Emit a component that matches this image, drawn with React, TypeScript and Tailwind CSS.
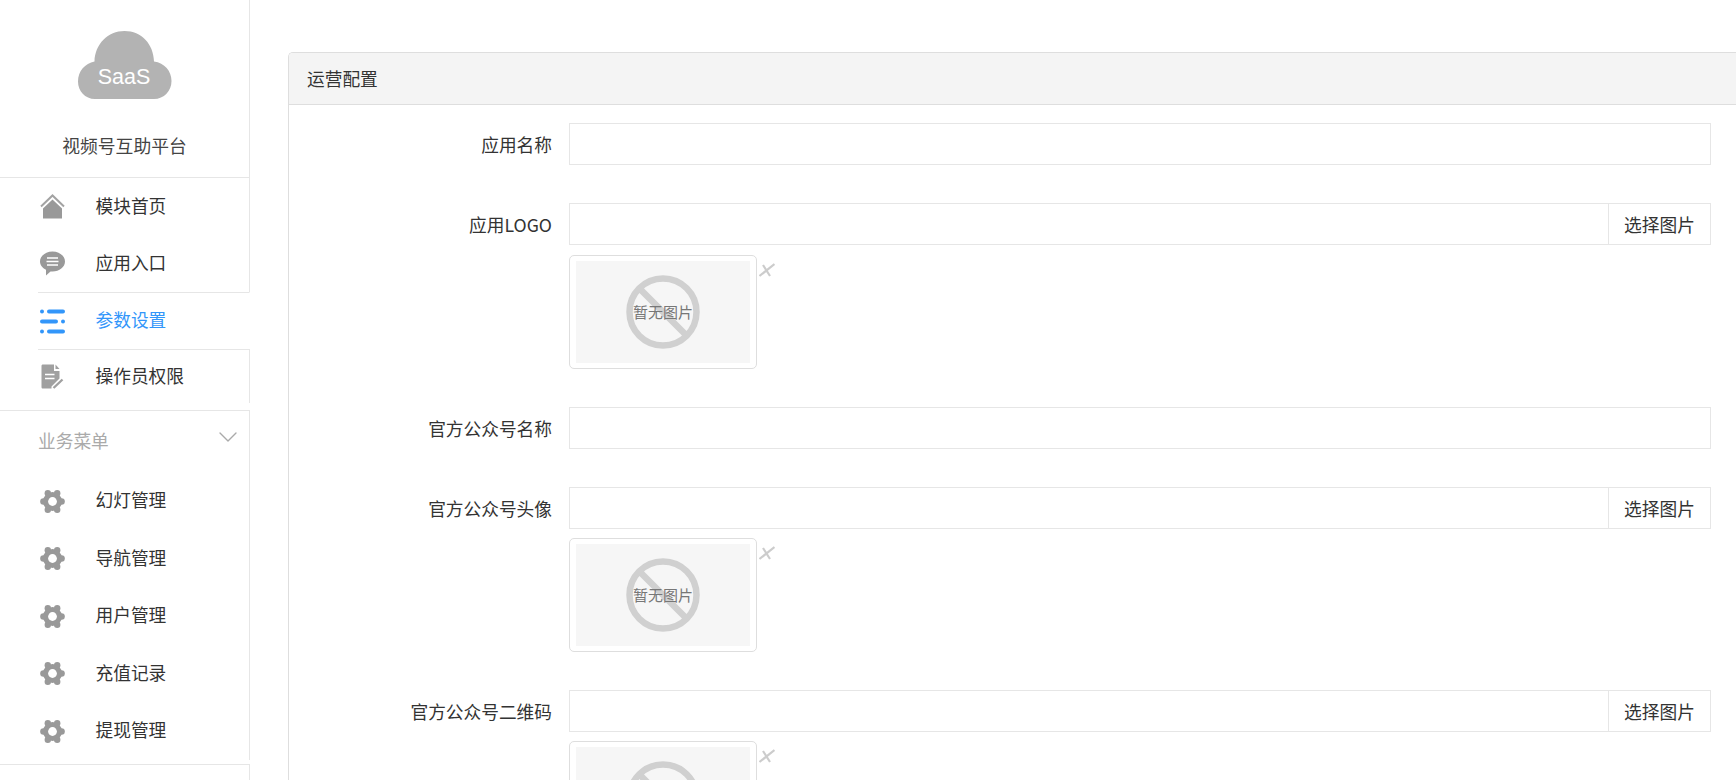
import { ChevronDown } from "lucide-react";
import type { ReactNode } from "react";

const FONT = "font-['Microsoft_YaHei','Noto_Sans_CJK_SC','Liberation_Sans',sans-serif]";

function CloudLogo() {
  return (
    <svg width="94" height="68" viewBox="0 0 94 68" className="block">
      <path
        d="M17 68C7 68 0 60 0 50.500C0 40 7 32.500 16.500 30.500C17 13 30 0 46.500 0C63.500 0 75.500 13 76 30.500C86.500 32 93.500 40 93.500 50C93.500 60 86 68 76 68Z"
        fill="#b3b3b3"
      />
      <text x="46" y="53" textAnchor="middle" fill="#fff" fontSize="21.500" fontFamily="Liberation Sans, sans-serif">
        SaaS
      </text>
    </svg>
  );
}

function HomeIcon() {
  return (
    <svg width="25" height="25" viewBox="0 0 25 25">
      <path d="M1 12.500L12.500 1.500L24 12.500" fill="none" stroke="#a3a3a3" strokeWidth="2" />
      <path d="M12.500 5.500L22 14.500V24.500H3V14.500Z" fill="#999" />
    </svg>
  );
}

function ChatIcon() {
  return (
    <svg width="25" height="25" viewBox="0 0 25 25">
      <path
        d="M12.500 0.500C19.400 0.500 25 5 25 10.500C25 16 19.400 20.500 12.500 20.500C11.800 20.500 11.200 20.500 10.500 20.400L6 24.500V18.700C2.400 17 0 14 0 10.500C0 5 5.600 0.500 12.500 0.500Z"
        fill="#999"
      />
      <path d="M7 7H18M6.500 10.500H18.500M7 14H18" stroke="#fff" strokeWidth="1.600" />
    </svg>
  );
}

function ListIcon() {
  return (
    <svg width="25" height="25" viewBox="0 0 25 25" fill="#3296fa">
      <circle cx="2" cy="2.500" r="2" />
      <rect x="7" y="0.500" width="18" height="4" rx="2" />
      <rect x="0" y="10.500" width="18" height="4" rx="2" />
      <circle cx="23" cy="12.500" r="2" />
      <circle cx="2" cy="22.500" r="2" />
      <rect x="7" y="20.500" width="18" height="4" rx="2" />
    </svg>
  );
}

function DocIcon() {
  return (
    <svg width="25" height="25" viewBox="0 0 25 25">
      <path d="M3 0.500H14V7H19.500V14.500L11.500 22.500V24.500H3C2 24.500 1.500 24 1.500 23V2C1.500 1 2 0.500 3 0.500Z" fill="#a0a0a0" />
      <path d="M15.500 0.500L19.500 5H15.500Z" fill="#a0a0a0" />
      <path d="M5 10.500H14.500M5 14.500H14.500" stroke="#fff" strokeWidth="1.700" />
      <path d="M13.500 24L22.500 15.500" stroke="#a0a0a0" strokeWidth="2.400" />
    </svg>
  );
}

function GearIcon() {
  return (
    <svg width="25" height="25" viewBox="0 0 25 25" fill="#999">
      <circle cx="12.500" cy="12.500" r="9.500" />
      <circle cx="3.400" cy="12.500" r="3.200" />
      <circle cx="21.600" cy="12.500" r="3.200" />
      <circle cx="7.800" cy="4.300" r="3.200" />
      <circle cx="17.200" cy="4.300" r="3.200" />
      <circle cx="7.800" cy="20.700" r="3.200" />
      <circle cx="17.200" cy="20.700" r="3.200" />
      <circle cx="12.500" cy="12.500" r="4.400" fill="#fff" />
    </svg>
  );
}

function NavItem({
  icon,
  label,
  active,
  divided,
  className,
}: {
  icon: ReactNode;
  label: string;
  active?: boolean;
  divided?: boolean;
  className: string;
}) {
  return (
    <div
      className={`ml-[38px] flex items-center border-r ${className} ${
        divided ? "border-t border-t-[#e6e6e6]" : ""
      } ${active ? "border-r-transparent text-[#3296fa]" : "border-r-[#e6e6e6] text-[#333]"}`}
    >
      <span className="w-[57.500px] pl-[2px] flex items-center shrink-0">{icon}</span>
      <span className="text-[17.700px] leading-none pb-[2px]">{label}</span>
    </div>
  );
}

const BUSINESS_MENU = ["幻灯管理", "导航管理", "用户管理", "充值记录", "提现管理"];

function Sidebar() {
  return (
    <aside className="w-[250px] h-[780px] shrink-0 overflow-hidden">
      <div className="h-[178px] border-r border-b border-[#e6e6e6] flex flex-col items-center pt-[31px]">
        <CloudLogo />
        <div className="mt-[33px] text-[17.800px] leading-[26px] text-[#444]">视频号互助平台</div>
      </div>
      <NavItem icon={<HomeIcon />} label="模块首页" className="h-[57px]" />
      <NavItem icon={<ChatIcon />} label="应用入口" className="h-[57px]" />
      <NavItem icon={<ListIcon />} label="参数设置" active divided className="h-[57px]" />
      <NavItem icon={<DocIcon />} label="操作员权限" divided className="h-[54px]" />
      <div className="mt-[7px] border-t border-t-[#e6e6e6] border-r border-r-[#e6e6e6] h-[62px] pl-[38px] pr-[5px] flex items-center justify-between">
        <span className="text-[17.700px] leading-none pb-[2px] text-[#aaa]">业务菜单</span>
        <ChevronDown size={32} strokeWidth={1} className="text-[#aaa] -mt-[9px]" />
      </div>
      {BUSINESS_MENU.map((label) => (
        <NavItem key={label} icon={<GearIcon />} label={label} className="h-[57.500px] pt-[1px]" />
      ))}
      <div className="mt-[4.500px] border-t border-t-[#e6e6e6] border-r border-r-[#e6e6e6] h-[20px]" />
    </aside>
  );
}

function ImagePreview({ className }: { className: string }) {
  return (
    <div className={`relative w-[188px] h-[114px] border border-[#dedede] rounded-[5px] px-[6px] py-[5px] ${className}`}>
      <div className="relative h-full bg-[#f6f6f6] flex items-center justify-center">
        <svg width="74" height="74" viewBox="0 0 74 74" className="absolute">
          <circle cx="37" cy="37" r="33.500" fill="none" stroke="#d0d0d0" strokeWidth="6.500" />
          <path d="M13 13L61 61" stroke="#d0d0d0" strokeWidth="6.500" />
        </svg>
        <span className="relative text-[15px] leading-none pb-[2px] text-[#777]">暂无图片</span>
      </div>
      <svg width="16" height="14" viewBox="0 0 16 14" className="absolute top-[7px] left-[189px]">
        <path d="M0.500 13L15.500 1M4 2L11 13" stroke="#ccc" strokeWidth="2.200" />
      </svg>
    </div>
  );
}

function FormRow({
  label,
  picker,
  previewClass = "mt-[9px]",
  className,
}: {
  label: string;
  picker?: boolean;
  previewClass?: string;
  className: string;
}) {
  return (
    <div className={`flex ${className}`}>
      <label className="w-[280px] pr-[17px] shrink-0 text-right text-[17.700px] leading-[42px] text-[#333]">
        {label}
      </label>
      <div className="flex-1">
        <div className="h-[42px] border border-[#e6e6e6] flex">
          <div className="flex-1" />
          {picker && (
            <div className="w-[102px] border-l border-l-[#e6e6e6] flex items-center justify-center text-[17.700px] text-[#333]">
              选择图片
            </div>
          )}
        </div>
        {picker && <ImagePreview className={previewClass} />}
      </div>
    </div>
  );
}

export default function App() {
  return (
    <div className={`flex w-[1736px] h-[780px] overflow-hidden bg-white ${FONT}`}>
      <Sidebar />
      <main className="flex-1 pl-[38px] pt-[52px] min-w-0">
        <div className="border border-r-0 border-[#dedede] rounded-tl-[5px] h-[760px] overflow-hidden">
          <div className="h-[52px] bg-[#f4f4f4] border-b border-b-[#dedede] pl-[18px] flex items-center text-[17.700px] text-[#333]">
            运营配置
          </div>
          <div className="pr-[25px] pt-[18px]">
            <FormRow label="应用名称" className="" />
            <FormRow label="应用LOGO" picker previewClass="mt-[10px]" className="mt-[38px]" />
            <FormRow label="官方公众号名称" className="mt-[38px]" />
            <FormRow label="官方公众号头像" picker className="mt-[38px]" />
            <FormRow label="官方公众号二维码" picker className="mt-[38px]" />
          </div>
        </div>
      </main>
    </div>
  );
}
